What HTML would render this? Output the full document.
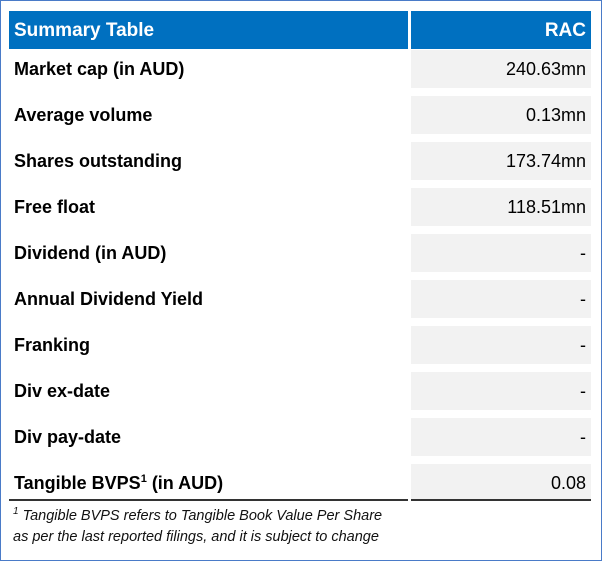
<!DOCTYPE html>
<html><head><style>
body{margin:0;width:602px;height:561px;background:#fff;position:relative;overflow:hidden;font-family:"Liberation Sans",sans-serif;}
.frame{position:absolute;left:0;top:0;width:600px;height:559px;border:1px solid #4a7bc8;}
.h{position:absolute;top:11px;height:38px;background:#0070c0;color:#fff;font-weight:bold;font-size:19px;line-height:40px;}
.l{position:absolute;left:14px;font-weight:bold;font-size:18px;color:#000;}
.g{position:absolute;left:411px;width:180px;height:38px;background:#f2f2f2;}
.v{position:absolute;right:16px;font-size:18px;color:#000;text-align:right;}
.fn{position:absolute;left:13px;font-style:italic;font-size:14.5px;color:#111;}
</style></head><body>
<div class="frame"></div>
<div class="h" style="left:9px;width:399px;padding-left:5px;box-sizing:border-box;">Summary Table</div>
<div class="h" style="left:411px;width:180px;text-align:right;padding-right:5px;box-sizing:border-box;">RAC</div>

<div class="g" style="top:50px"></div>
<div class="g" style="top:96px"></div>
<div class="g" style="top:142px"></div>
<div class="g" style="top:188px"></div>
<div class="g" style="top:234px"></div>
<div class="g" style="top:280px"></div>
<div class="g" style="top:326px"></div>
<div class="g" style="top:372px"></div>
<div class="g" style="top:418px"></div>
<div class="g" style="top:464px;height:35px"></div>

<div class="l" style="top:59px">Market cap (in AUD)</div><div class="v" style="top:59px">240.63mn</div>
<div class="l" style="top:105px">Average volume</div><div class="v" style="top:105px">0.13mn</div>
<div class="l" style="top:151px">Shares outstanding</div><div class="v" style="top:151px">173.74mn</div>
<div class="l" style="top:197px">Free float</div><div class="v" style="top:197px">118.51mn</div>
<div class="l" style="top:243px">Dividend (in AUD)</div><div class="v" style="top:243px">-</div>
<div class="l" style="top:289px">Annual Dividend Yield</div><div class="v" style="top:289px">-</div>
<div class="l" style="top:335px">Franking</div><div class="v" style="top:335px">-</div>
<div class="l" style="top:381px">Div ex-date</div><div class="v" style="top:381px">-</div>
<div class="l" style="top:427px">Div pay-date</div><div class="v" style="top:427px">-</div>
<div class="l" style="top:473px">Tangible BVPS<sup style="font-size:11px">1</sup> (in AUD)</div><div class="v" style="top:473px">0.08</div>

<div style="position:absolute;left:9px;top:499px;width:399px;height:2px;background:#333"></div>
<div style="position:absolute;left:411px;top:499px;width:180px;height:2px;background:#333"></div>

<div class="fn" style="top:506px"><sup style="font-size:10px">1</sup> Tangible BVPS refers to Tangible Book Value Per Share</div>
<div class="fn" style="top:529px">as per the last reported filings, and it is subject to change</div>
</body></html>
